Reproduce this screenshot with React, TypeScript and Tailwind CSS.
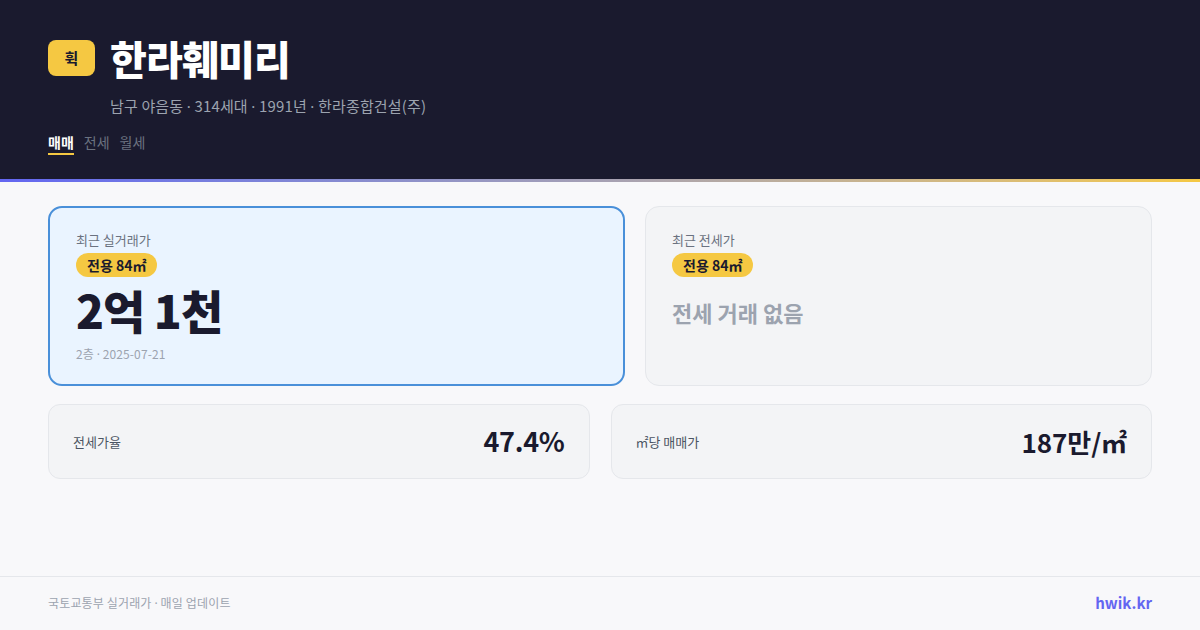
import React from "react";

const font = { fontFamily: '"Noto Sans CJK KR", "Noto Sans", sans-serif' };

function Dot() {
  return <span className="font-['Noto_Sans']">·</span>;
}

export default function App() {
  return (
    <div className="w-[1200px] h-[630px] flex flex-col bg-[#f8f8fa] overflow-hidden" style={font}>
      <header className="h-[179px] bg-[#1a1a2e] px-[48px] pt-[36px] flex flex-col">
        <div className="flex items-center gap-[15px] h-[44px]">
          <div className="w-[47px] h-[36px] rounded-[8px] bg-[#f5c842] flex items-center justify-center text-[15px] font-bold text-[#1a1a2e]">휙</div>
          <div className="text-[40px] leading-none font-black text-white tracking-[-0.8px]">한라훼미리</div>
        </div>
        <div className="pl-[62px] mt-[16px] text-[15px] leading-[20px] text-[#9ca3af] tracking-[0.15px]">
          남구 야음동 <Dot /> 314세대 <Dot /> 1991년 <Dot /> 한라종합건설(주)
        </div>
        <div className="flex gap-[10px] mt-[16px] text-[14px] leading-[20px]">
          <div className="flex flex-col">
            <span className="text-white font-bold">매매</span>
            <span className="h-[2px] bg-[#f5c842] mt-[1px]" />
          </div>
          <span className="text-[#6b7280]">전세</span>
          <span className="text-[#6b7280]">월세</span>
        </div>
      </header>
      <div className="h-[3px] bg-gradient-to-r from-[#6366f1] to-[#f5c842]" />
      <main className="flex-1 px-[48px] pt-[24px] flex flex-col gap-[18px]">
        <div className="grid grid-cols-[577px_507px] gap-[20px] h-[180px]">
          <div className="rounded-[14px] border-2 border-[#4a90d9] bg-[#eaf4ff] px-[26px] pt-[22px]">
            <div className="text-[13px] leading-[20px] text-[#6b7280]">최근 실거래가</div>
            <div className="mt-[3px] inline-flex h-[24px] items-center rounded-full bg-[#f5c842] px-[11px] text-[14px] font-bold text-[#1a1a2e]">전용 84㎡</div>
            <div className="mt-[5px] text-[46px] leading-[54px] font-black text-[#1a1a2e] tracking-[-1px]">2억 1천</div>
            <div className="mt-[9px] text-[12px] leading-[18px] text-[#9ca3af] tracking-[0.1px]">2층 <Dot /> 2025-07-21</div>
          </div>
          <div className="rounded-[14px] border border-[#e5e7eb] bg-[#f3f4f6] px-[26px] pt-[23px]">
            <div className="text-[13px] leading-[20px] text-[#6b7280]">최근 전세가</div>
            <div className="mt-[3px] inline-flex h-[24px] items-center rounded-full bg-[#f5c842] px-[11px] text-[14px] font-bold text-[#1a1a2e]">전용 84㎡</div>
            <div className="mt-[20px] text-[22px] leading-[30px] font-bold text-[#9ca3af]">전세 거래 없음</div>
          </div>
        </div>
        <div className="grid grid-cols-2 gap-[21px] h-[75px]">
          <div className="rounded-[12px] border border-[#e5e7eb] bg-[#f3f4f6] px-[24px] flex items-center justify-between">
            <span className="text-[13px] text-[#4b5563]">전세가율</span>
            <span className="text-[27px] font-bold text-[#1a1a2e] tracking-[-0.3px]">47.4%</span>
          </div>
          <div className="rounded-[12px] border border-[#e5e7eb] bg-[#f3f4f6] px-[24px] flex items-center justify-between">
            <span className="text-[13px] text-[#4b5563]">㎡당 매매가</span>
            <span className="text-[26px] font-bold text-[#1a1a2e] tracking-[-0.1px]">187만/㎡</span>
          </div>
        </div>
      </main>
      <footer className="h-[54px] border-t border-[#e5e7eb] px-[48px] flex items-center justify-between">
        <span className="text-[12px] text-[#9ca3af] tracking-[0.15px]">국토교통부 실거래가 <Dot /> 매일 업데이트</span>
        <span className="text-[15px] font-bold text-[#6366f1]">hwik.kr</span>
      </footer>
    </div>
  );
}
